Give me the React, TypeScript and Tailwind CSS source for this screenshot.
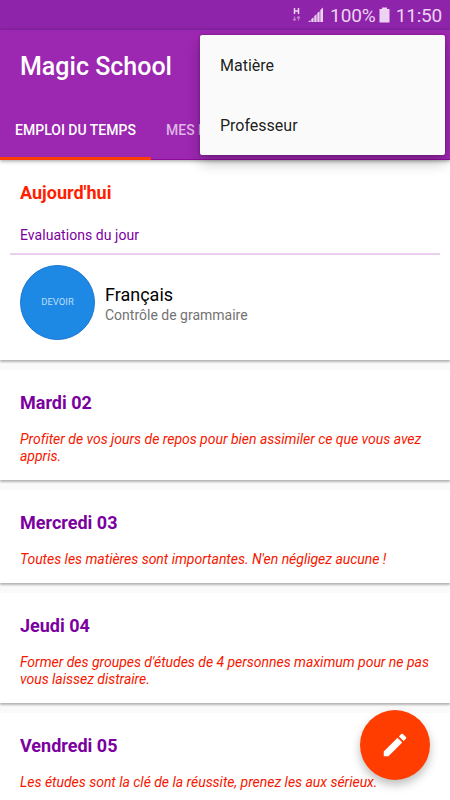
import React from 'react';
import { MdCreate } from 'react-icons/md';

interface Day {
  title: string;
  message: string;
  height: string;
}

const days: Day[] = [
  {
    title: 'Mardi 02',
    message: 'Profiter de vos jours de repos pour bien assimiler ce que vous avez appris.',
    height: 'h-[110px]',
  },
  {
    title: 'Mercredi 03',
    message: "Toutes les matières sont importantes. N'en négligez aucune !",
    height: 'h-[93px]',
  },
  {
    title: 'Jeudi 04',
    message: "Former des groupes d'études de 4 personnes maximum pour ne pas vous laissez distraire.",
    height: 'h-[110px]',
  },
  {
    title: 'Vendredi 05',
    message: 'Les études sont la clé de la réussite, prenez les aux sérieux.',
    height: 'h-[93px]',
  },
];

const StatusBar: React.FC = () => (
  <div className="h-[30px] shrink-0 bg-[#8e24aa] flex items-center justify-end pr-2 text-[#ecd3f2]">
    <svg className="w-[9px] h-4 mr-[7px]" viewBox="0 0 9 16">
      <path d="M2.5 1V7M6.5 1V7M2.5 4H6.5" stroke="currentColor" strokeWidth="1.5" fill="none" />
      <path
        d="M2.5 9.5V13.5M1 12L2.5 13.5L4 12M6.5 13.5V9.5M5 11L6.5 9.5L8 11"
        stroke="currentColor"
        strokeWidth="1.2"
        fill="none"
        opacity="0.5"
      />
    </svg>
    <svg className="w-4 h-4 mr-[6px]" viewBox="0 0 16 16" fill="currentColor">
      <path d="M0 15L2.5 13V15ZM3.3 12L5.6 10.2V15H3.3ZM6.3 9L8.6 7.2V15H6.3ZM9.3 6L11.6 4.2V15H9.3ZM12.3 3L15 0.5V15H12.3Z" />
    </svg>
    <span className="text-[19px] leading-[30px] pt-px tracking-[-0.1px]">100%</span>
    <svg className="w-[11px] h-4 ml-[3px] mr-[6px]" viewBox="0 0 11 16" fill="currentColor">
      <path d="M3 0.5H8V2H10.5V15.5H0.5V2H3Z" />
    </svg>
    <span className="text-[19px] leading-[30px] pt-px tracking-[-0.2px]">11:50</span>
  </div>
);

const Header: React.FC = () => (
  <header className="h-[130px] shrink-0 bg-[#9c27b0] border-b border-[#8e0a9c] text-white flex flex-col relative shadow-[0_1px_4px_rgba(0,0,0,0.4)]">
    <h1 className="pl-5 h-[73px] text-[25px] font-medium leading-[73px]">Magic School</h1>
    <nav className="flex flex-1 text-[14px] font-medium">
      <div className="w-[151px] h-[57px] -mb-px border-b-[3px] border-[#ff3d00] flex items-center justify-center pt-px">
        EMPLOI DU TEMPS
      </div>
      <div className="pl-[15px] h-[54px] flex items-center pt-px text-[#dfb5e6] whitespace-nowrap">MES M</div>
    </nav>
  </header>
);

const Menu: React.FC = () => (
  <div className="absolute top-[35px] right-[5px] w-[245px] h-[120px] bg-[#fafafa] rounded-[2px] flex flex-col text-[16px] text-black/90 shadow-[0_8px_14px_rgba(0,0,0,0.22),0_0_3px_rgba(0,0,0,0.3)]">
    <div className="h-[60px] px-5 pt-0.5 flex items-center">Matière</div>
    <div className="h-[60px] px-5 pt-0.5 flex items-center">Professeur</div>
  </div>
);

const TodayCard: React.FC = () => (
  <section className="h-[200px] shrink-0 bg-white px-5 shadow-[0_1.5px_2px_rgba(0,0,0,0.28)]">
    <h2 className="pt-[22px] text-[18px] leading-[22px] font-bold text-[#ff1e00]">Aujourd'hui</h2>
    <h3 className="pt-[21px] text-[14px] leading-[20px] tracking-[0.05px] text-[#7b00a0]">Evaluations du jour</h3>
    <div className="-mx-[10px] mt-[8px] h-[2px] bg-[#ebcff0]" />
    <div className="mt-[10px] flex items-center">
      <div className="w-[75px] h-[75px] rounded-full bg-[#1e88e5] border border-[#1976d2] flex items-center justify-center text-[9.5px] text-[#bbdefb]">
        DEVOIR
      </div>
      <div className="ml-[10px] pt-[4px]">
        <p className="text-[18px] leading-[21px] text-black">Français</p>
        <p className="text-[14px] leading-[21px] text-[#737373]">Contrôle de grammaire</p>
      </div>
    </div>
  </section>
);

const DayCard: React.FC<Day> = ({ title, message, height }) => (
  <section className={`${height} shrink-0 bg-white px-5 shadow-[0_1.5px_2px_rgba(0,0,0,0.28)]`}>
    <h2 className="pt-[22px] text-[18px] leading-[22px] font-bold text-[#7b00a0]">{title}</h2>
    <p className="pt-[17px] text-[14px] leading-[16.5px] tracking-[-0.02px] italic text-[#f51800]">{message}</p>
  </section>
);

export default function App() {
  return (
    <div className="relative w-[450px] h-[800px] overflow-hidden bg-[#fafafa] flex flex-col font-['Roboto',sans-serif]">
      <StatusBar />
      <Header />
      <main className="flex-1 flex flex-col gap-[10px] overflow-hidden">
        <TodayCard />
        {days.map((day) => (
          <DayCard key={day.title} {...day} />
        ))}
      </main>
      <Menu />
      <button className="absolute left-[360px] top-[710px] w-[70px] h-[70px] rounded-full bg-[#ff3d00] text-white flex items-center justify-center shadow-[0_5px_10px_rgba(0,0,0,0.25)]">
        <MdCreate className="w-[30px] h-[30px]" />
      </button>
    </div>
  );
}
